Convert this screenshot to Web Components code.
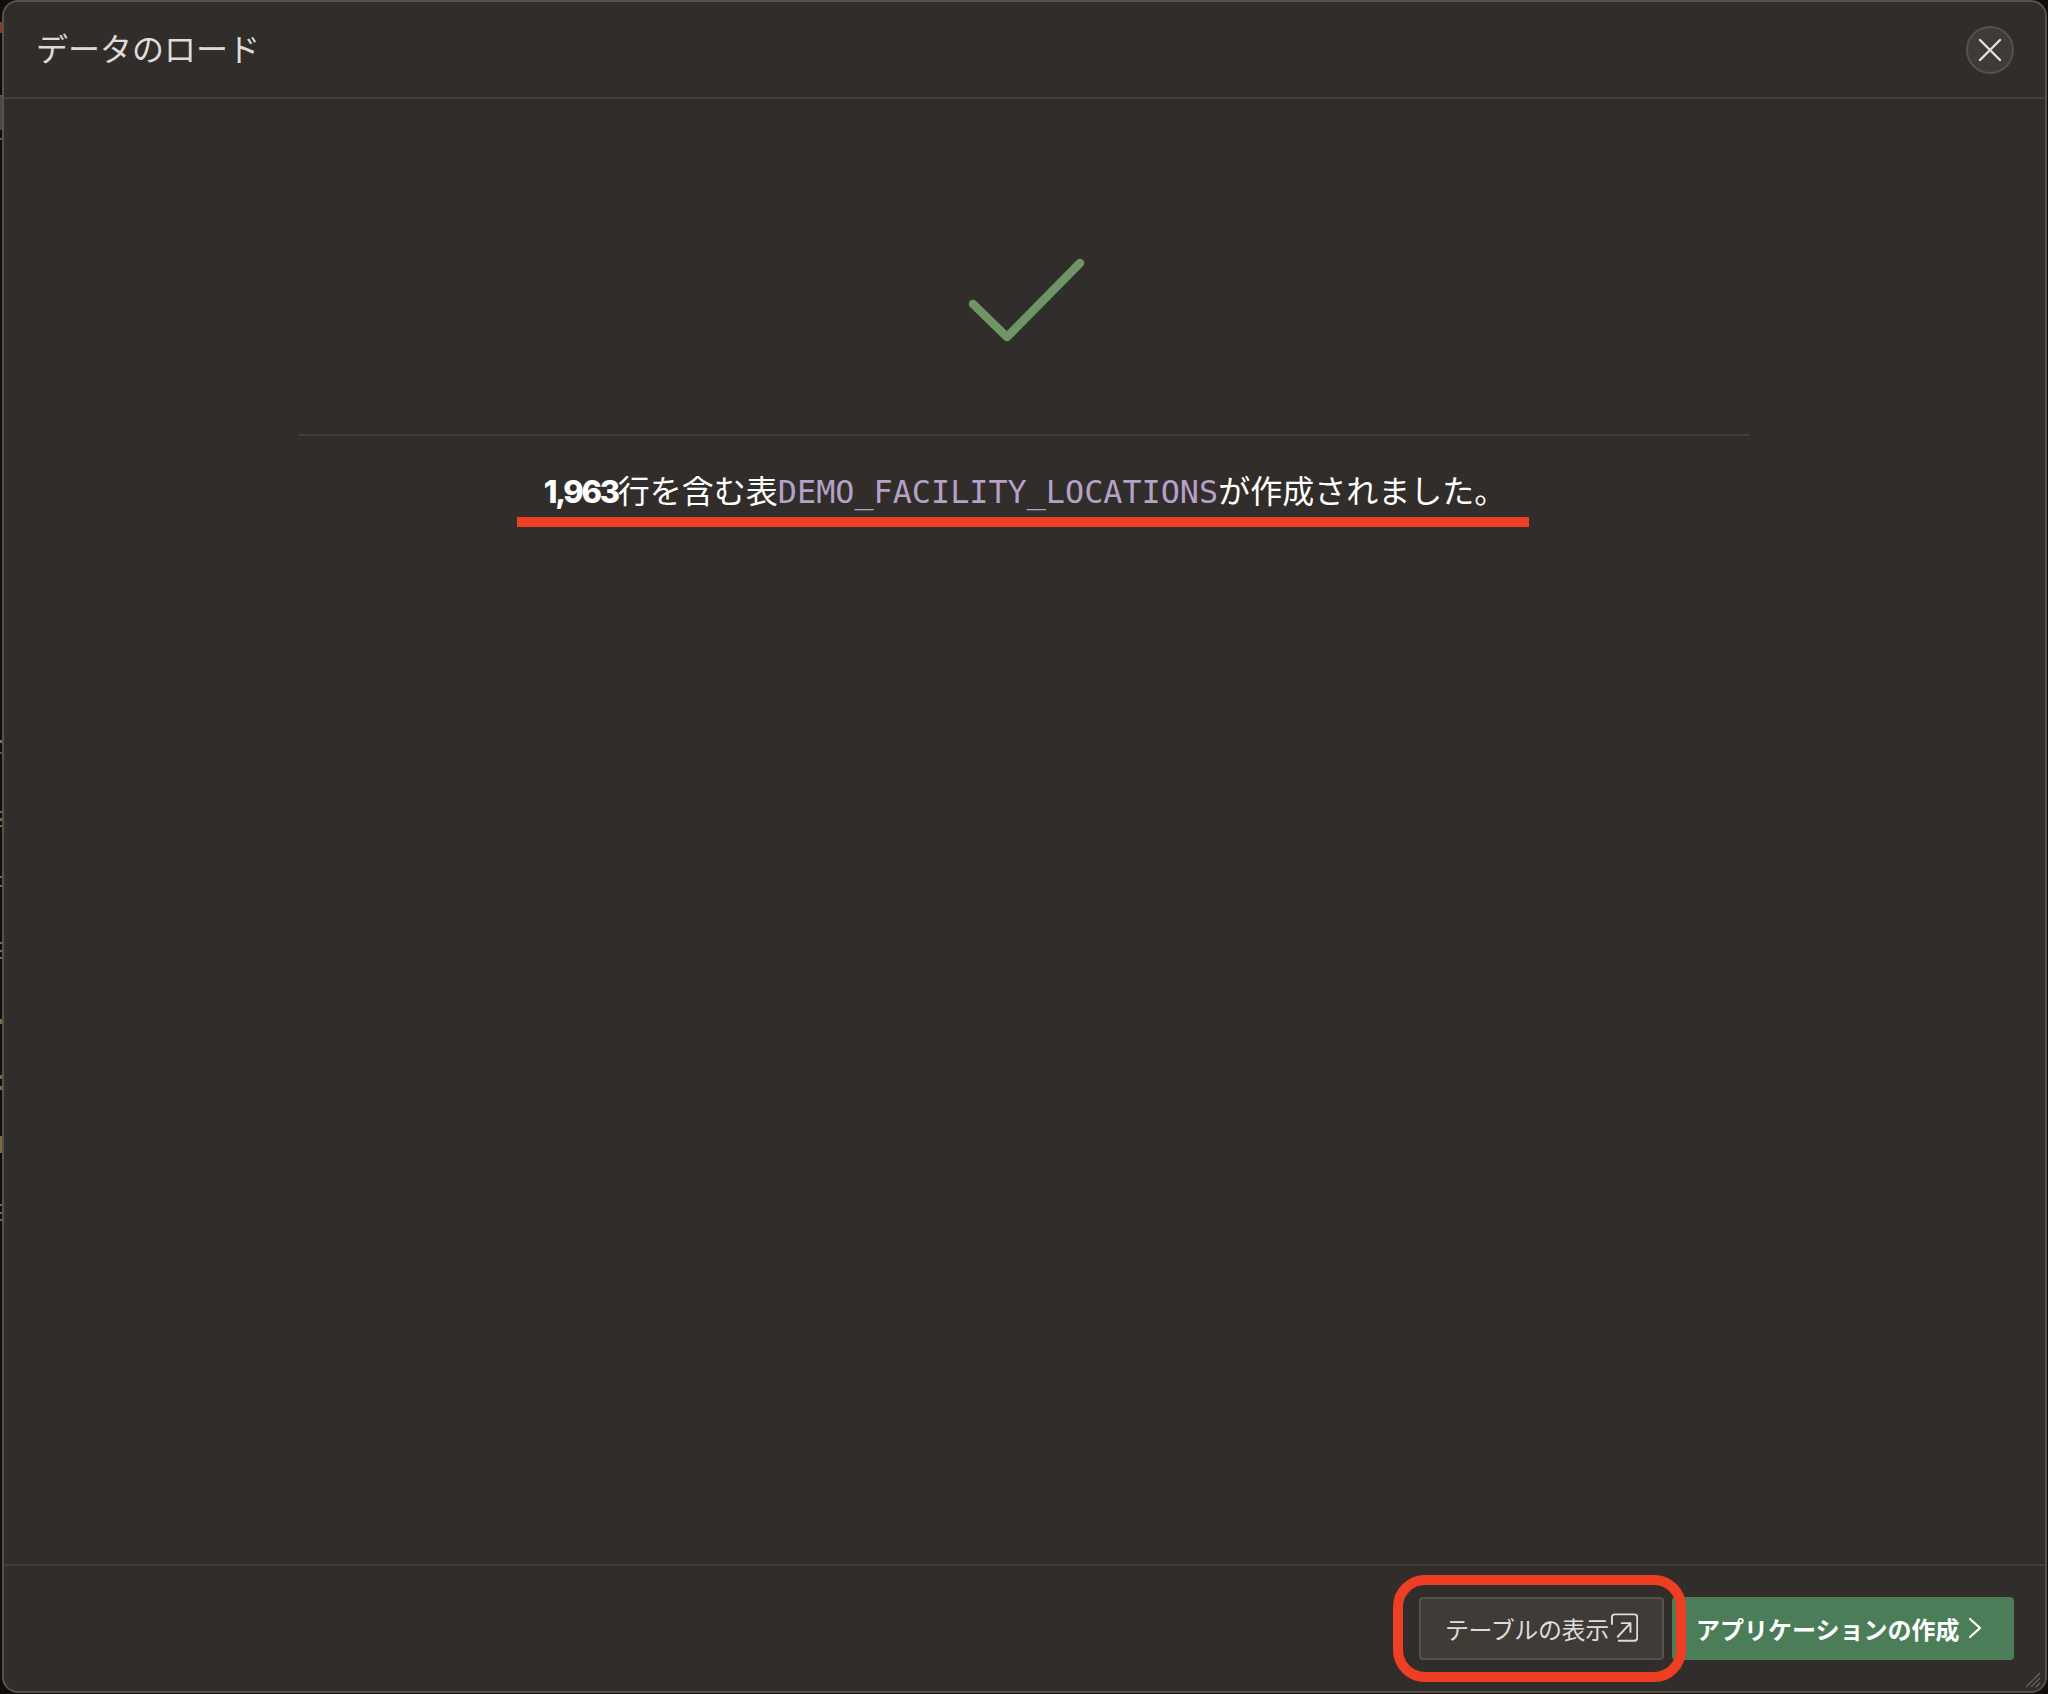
<!DOCTYPE html>
<html lang="ja">
<head>
<meta charset="utf-8">
<title>データのロード</title>
<style>
  html, body { margin: 0; height: 100%; }
  body {
    /* bits of the page behind the dialog, showing along the left edge */
    background:
      linear-gradient(to bottom,
        #0f0e0d 0 22px, #8a3a2a 22px 33px, #0f0e0d 33px 95px, #3c6b4c 95px 97px, #4a4744 97px 130px, #0f0e0d 130px 138px,
        #3c6b4c 138px 140px, #0f0e0d 140px 740px, #77736e 740px 743px, #0f0e0d 743px 752px, #55514d 752px 754px,
        #0f0e0d 754px 811px, #7a6a3e 811px 813px, #0f0e0d 813px 818px, #7a6a3e 818px 821px, #0f0e0d 821px 825px,
        #7a6a3e 825px 827px, #0f0e0d 827px 876px, #7a6a3e 876px 878px, #0f0e0d 878px 885px, #7a6a3e 885px 887px,
        #0f0e0d 887px 942px, #7a6a3e 942px 944px, #0f0e0d 944px 950px, #7a6a3e 950px 952px, #0f0e0d 952px 957px,
        #7a6a3e 957px 959px, #0f0e0d 959px 1019px, #7a6a3e 1019px 1024px, #0f0e0d 1024px 1075px, #7a6a3e 1075px 1079px,
        #0f0e0d 1079px 1086px, #7a6a3e 1086px 1090px, #0f0e0d 1090px 1136px, #7a6a3e 1136px 1153px, #0f0e0d 1153px 1204px,
        #7a6a3e 1204px 1206px, #0f0e0d 1206px 1212px, #7a6a3e 1212px 1214px, #0f0e0d 1214px 1219px, #7a6a3e 1219px 1221px,
        #0f0e0d 1221px)
      0 0 / 2px 100% no-repeat,
      #0f0e0d;
    font-family: "Noto Sans CJK JP", "Noto Sans", sans-serif;
    overflow: hidden;
  }
</style>
</head>
<body>
<load-dialog heading="データのロード">
  <load-result>
    <b slot="count">1,963</b>
    <span slot="before">行を含む表</span>
    <span slot="table">DEMO_FACILITY_LOCATIONS</span>
    <span slot="after">が作成されました。</span>
  </load-result>
  <dialog-button slot="footer" icon="external">テーブルの表示</dialog-button>
  <dialog-button slot="footer" variant="primary" icon="chevron">アプリケーションの作成</dialog-button>
</load-dialog>
<mark-box style="left:1393px;top:1575px;width:293px;height:107px"></mark-box>
<mark-box line style="left:517px;top:517px;width:1012px;height:10px"></mark-box>

<script>
class LoadDialog extends HTMLElement {
  connectedCallback() {
    this.attachShadow({ mode: 'open' });
    this.shadowRoot.innerHTML = `
      <style>
        :host {
          display: flex;
          flex-direction: column;
          box-sizing: border-box;
          height: 1693px;
          margin: 0 1px 0 2px;
          background: #312d2a;
          border: 2px solid #55514d;
          border-radius: 16px;
          color: #dedcda;
          position: relative;
        }
        header {
          display: flex;
          align-items: center;
          justify-content: space-between;
          height: 97px;
          flex: none;
          box-sizing: border-box;
          padding: 0 31px 0 32px;
          border-bottom: 2px solid #423e3a;
        }
        h1 {
          margin: 0;
          padding-bottom: 5px;
          font-size: 32px;
          font-weight: 400;
          line-height: 1;
        }
        button {
          box-sizing: border-box;
          width: 48px;
          height: 48px;
          padding: 0;
          display: flex;
          align-items: center;
          justify-content: center;
          border-radius: 50%;
          border: 2px solid #55514d;
          background: #3f3b37;
        }
        main {
          flex: 1;
          min-height: 0;
        }
        footer {
          display: flex;
          justify-content: flex-end;
          gap: 8px;
          flex: none;
          box-sizing: border-box;
          height: 127px;
          padding: 31px 31px 0 0;
          border-top: 2px solid #423e3a;
        }
        .grip {
          position: absolute;
          right: 4px;
          bottom: 3px;
        }
      </style>
      <header>
        <h1>${this.getAttribute('heading')}</h1>
        <button aria-label="閉じる">
          <svg width="24" height="24" viewBox="0 0 24 24" fill="none" stroke="#e4e2e0" stroke-width="2.4" stroke-linecap="round">
            <path d="M2 2 22 22M22 2 2 22"/>
          </svg>
        </button>
      </header>
      <main><slot></slot></main>
      <footer><slot name="footer"></slot></footer>
      <svg class="grip" width="16" height="16" viewBox="0 0 16 16" fill="none" stroke="#6a6662" stroke-width="1.2">
        <path d="M1 15 15 1M6 15 15 6M11 15 15 11"/>
      </svg>
    `;
  }
}

class LoadResult extends HTMLElement {
  connectedCallback() {
    this.attachShadow({ mode: 'open' });
    this.shadowRoot.innerHTML = `
      <style>
        :host {
          display: flex;
          flex-direction: column;
          align-items: center;
          padding-right: 2px;
        }
        .icon {
          display: block;
          margin: 159px 0 0 2px;
          height: 92px;
        }
        .rule {
          width: 1450px;
          height: 2px;
          margin-top: 84px;
          background: #423e3a;
        }
        p {
          margin: 30px 0 0 3px;
          font-size: 32px;
          line-height: 46px;
          color: #ffffff;
          white-space: nowrap;
          display: flex;
          align-items: baseline;
        }
        ::slotted([slot="count"]) {
          font-family: Inter, "Noto Sans", sans-serif;
          font-weight: 800;
          font-size: 31px;
          letter-spacing: -2.3px;
        }
        ::slotted([slot="table"]) {
          font-family: "DejaVu Sans Mono", monospace;
          font-size: 31.8px;
          color: #b5a0c6;
        }
      </style>
      <svg class="icon" width="120" height="92" viewBox="0 0 120 92" fill="none" stroke="#6f9566" stroke-width="8.5" stroke-linecap="round" stroke-linejoin="round">
        <path d="M8 46 42 79 115 5"/>
      </svg>
      <div class="rule"></div>
      <p>
        <slot name="count"></slot><slot name="before"></slot><slot name="table"></slot><slot name="after"></slot>
      </p>
    `;
  }
}

class DialogButton extends HTMLElement {
  connectedCallback() {
    const primary = this.getAttribute('variant') === 'primary';
    const icons = {
      external: `<svg width="30" height="32" viewBox="0 0 30 32" fill="none" stroke="#dedcda" stroke-width="2" stroke-linecap="round" stroke-linejoin="round">
          <path d="M3 12V5Q3 2 6 2H26Q29 2 29 5V26Q29 29 26 29H10"/>
          <path d="M9 25 22 11M13 11H22V20"/>
        </svg>`,
      chevron: `<svg width="14" height="24" viewBox="0 0 14 24" fill="none" stroke="#ffffff" stroke-width="2.2" stroke-linecap="round" stroke-linejoin="round">
          <path d="M2 3 12 12 2 21"/>
        </svg>`
    };
    this.attachShadow({ mode: 'open' });
    this.shadowRoot.innerHTML = `
      <style>
        :host {
          display: inline-flex;
          align-items: center;
          box-sizing: border-box;
          height: 63px;
          border-radius: 4px;
          font-size: 24px;
          white-space: nowrap;
          padding-bottom: 1px;
          ${primary
            ? 'width: 342px; padding-left: 24px; padding-right: 32px; justify-content: space-between; background: #4a7d58; color: #ffffff; font-weight: 700;'
            : 'width: 245px; padding-left: 24px; padding-right: 24px; gap: 0; background: #3f3b37; border: 2px solid #55514d; color: #dedcda; letter-spacing: -0.4px;'}
        }
      </style>
      <slot></slot>
      ${icons[this.getAttribute('icon')] || ''}
    `;
  }
}

// red annotation drawn over the screenshot
class MarkBox extends HTMLElement {
  connectedCallback() {
    const line = this.hasAttribute('line');
    this.attachShadow({ mode: 'open' });
    this.shadowRoot.innerHTML = `
      <style>
        :host {
          position: absolute;
          box-sizing: border-box;
          display: block;
          ${line ? 'background: #ee3f24;' : 'border: 10px solid #ee3f24; border-radius: 32px;'}
        }
      </style>
    `;
  }
}

customElements.define('load-dialog', LoadDialog);
customElements.define('load-result', LoadResult);
customElements.define('dialog-button', DialogButton);
customElements.define('mark-box', MarkBox);
</script>
</body>
</html>
